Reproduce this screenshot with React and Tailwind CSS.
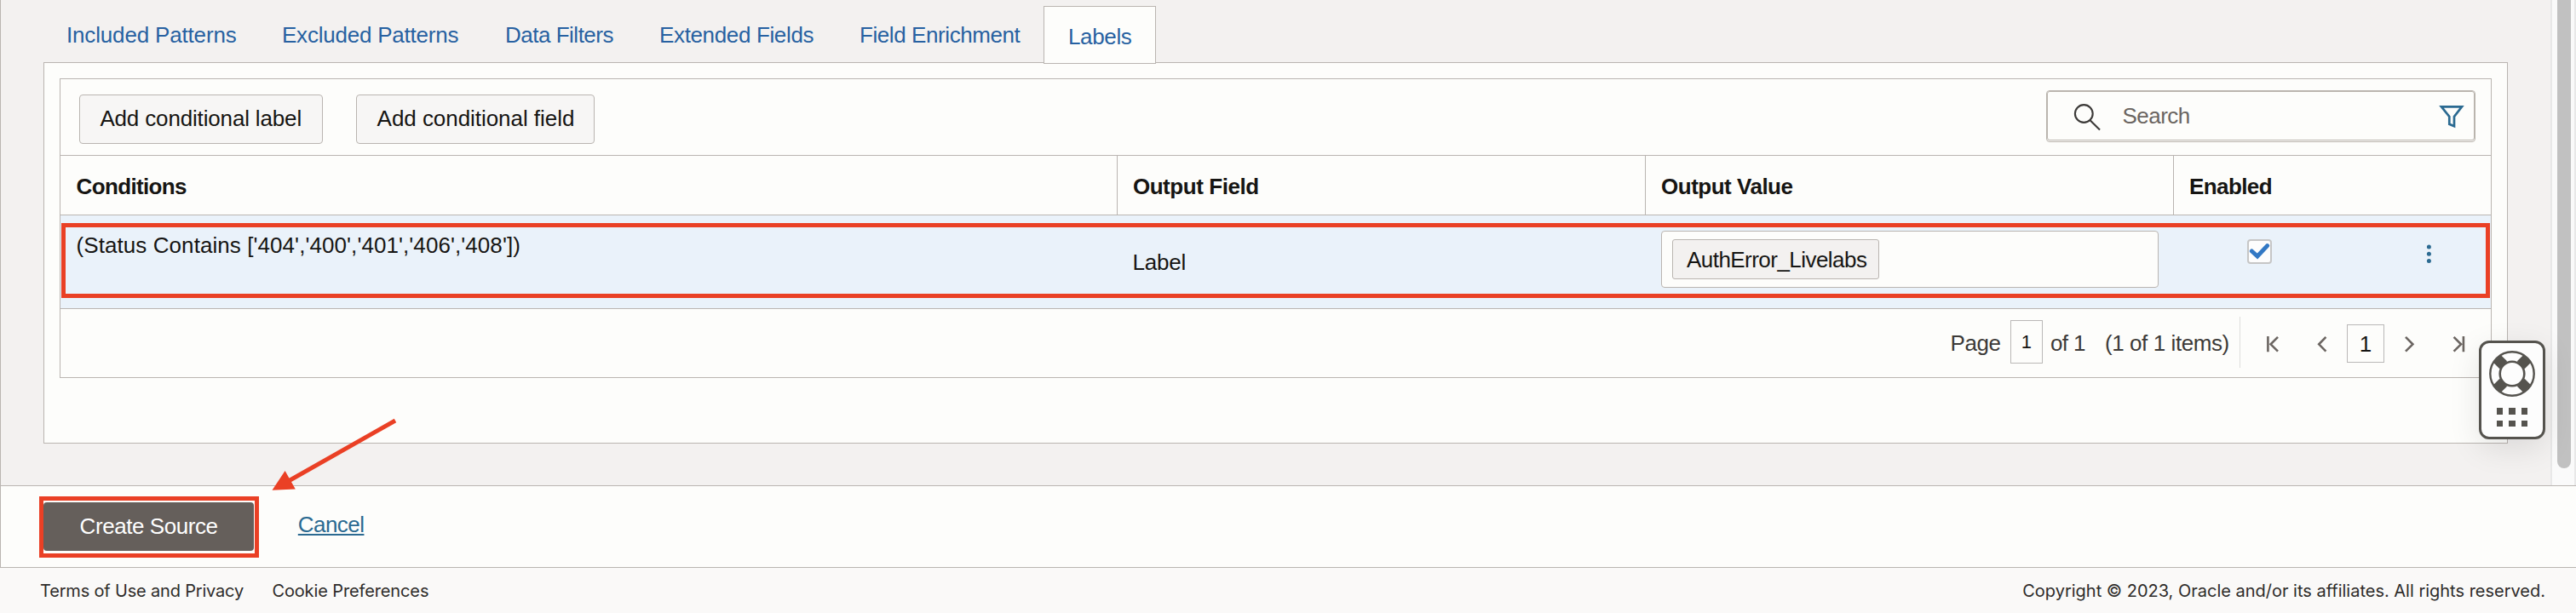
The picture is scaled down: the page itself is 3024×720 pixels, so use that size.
const tabs = [
  { label: 'Included Patterns', cls: 'w-[253px] tracking-[-0.166px]' },
  { label: 'Excluded Patterns', cls: 'w-[262px] tracking-[-0.219px]' },
  { label: 'Data Filters', cls: 'w-[181px] tracking-[-0.493px]' },
  { label: 'Extended Fields', cls: 'w-[235px] tracking-[-0.353px]' },
  { label: 'Field Enrichment', cls: 'w-[216px] tracking-[-0.417px]' },
];

function TabBar() {
  return (
    <div className="relative z-10 flex h-[73px] shrink-0 items-start pl-[77px] text-[#2761a1]">
      {tabs.map((t) => (
        <button key={t.label} className={`mt-[26px] shrink-0 text-left ${t.cls}`}>
          {t.label}
        </button>
      ))}
      <button className="mt-[7px] h-[68px] w-[132px] border border-[#bab5b1] bg-[#fdfdfb] pt-[4px] pl-[28px] text-left tracking-[-0.363px]">
        Labels
      </button>
    </div>
  );
}

function SearchBox() {
  return (
    <div className="mt-[13px] mr-[18px] h-[61px] w-[504px] rounded-[4px] border border-[#bab5ae]">
      <div className="flex h-[58px] items-start rounded-[3px] border border-[#bab5ae]">
        <svg className="mt-[12px] ml-[28px] shrink-0" width="36" height="36" viewBox="2432 120 36 36" fill="none" stroke="#3c3a38" strokeWidth="2.1">
          <circle cx="2446.3" cy="133.5" r="10.4" />
          <path d="M2453.6 141.2 2465 152.6" />
        </svg>
        <span className="mt-[13px] ml-[23.5px] w-[368px] tracking-[-0.544px] text-[#6b6561]">Search</span>
        <svg className="mt-[14px] shrink-0" width="36" height="32" viewBox="2860 122 36 32" fill="none" stroke="#2b6a91" strokeWidth="2.7">
          <path d="M2866 125.4H2890L2881 137V148.2L2875.3 145.8V137Z" />
        </svg>
      </div>
    </div>
  );
}

function Toolbar() {
  return (
    <div className="flex h-[90px] items-start justify-between border-b border-[#bab5b1] pl-[22px]">
      <div className="flex gap-[39px] pt-[18px]">
        <button className="h-[58px] w-[286px] rounded-[4px] border border-[#bab5b1] bg-[#f7f6f5] pb-[2px] pl-[23.4px] text-left tracking-[-0.159px]">
          Add conditional label
        </button>
        <button className="h-[58px] w-[280px] rounded-[4px] border border-[#bab5b1] bg-[#f7f6f5] pb-[2px] pl-[23.6px] text-left tracking-[-0.048px]">
          Add conditional field
        </button>
      </div>
      <SearchBox />
    </div>
  );
}

function TableHeader() {
  return (
    <div className="flex h-[70px] border-b border-[#bab5b1] font-bold">
      <div className="w-[1241px] border-r border-[#bab5b1] pt-[21px] pl-[18.6px] tracking-[-0.643px]">Conditions</div>
      <div className="w-[620px] border-r border-[#bab5b1] pt-[21px] pl-[17.9px] tracking-[-0.436px]">Output Field</div>
      <div className="w-[620px] border-r border-[#bab5b1] pt-[21px] pl-[18px] tracking-[-0.489px]">Output Value</div>
      <div className="flex-1 pt-[21px] pl-[18px] tracking-[-0.592px]">Enabled</div>
    </div>
  );
}

function TableRow() {
  return (
    <div className="flex h-[110px] items-start border-b border-[#bab5b1] bg-[#eaf2fa]">
      <div className="w-[1241px] pt-[20px] pl-[18.6px] tracking-[0.069px]">(Status Contains ['404','400','401','406','408'])</div>
      <div className="w-[620px] pt-[40px] pl-[17.4px] tracking-[-0.185px]">Label</div>
      <div className="w-[620px] pt-[18px] pl-[18px]">
        <div className="h-[67px] w-[584px] rounded-[4px] border border-[#bab5b1] bg-[#fdfdfb] pt-[9px] pl-[12px]">
          <div className="h-[47px] w-[243px] rounded-[3px] border border-[#bab5b1] bg-[#f3f1f0] pt-[8px] pl-[16px] tracking-[-0.542px]">
            AuthError_Livelabs
          </div>
        </div>
      </div>
      <div className="mt-[28px] ml-[86px] h-[29px] w-[29px] rounded-[4px] border-2 border-[#c6c6c6] bg-[#fdfdfd]">
        <svg width="25" height="25" viewBox="2640 283 25 25" fill="none" stroke="#3278c4" strokeWidth="5">
          <path d="M2643.4 295 2650 301 2661.6 288.6" strokeLinecap="round" />
        </svg>
      </div>
      <svg className="mt-[30px] ml-[174px]" width="20" height="32" viewBox="2841 283 20 32" fill="#2b6a91">
        <circle cx="2851.4" cy="290" r="2.5" />
        <circle cx="2851.4" cy="298.3" r="2.5" />
        <circle cx="2851.4" cy="306.6" r="2.5" />
      </svg>
    </div>
  );
}

function NavIcon({ d, x, className }) {
  return (
    <svg className={`mt-[29px] shrink-0 ${className}`} width="20" height="24" viewBox={`${x} 392 20 24`} fill="none" stroke="#6b6561" strokeWidth="2.6">
      <path d={d} />
    </svg>
  );
}

function Pagination() {
  return (
    <div className="flex h-[80px] items-start pl-[2218.4px] text-[#3c3a38]">
      <span className="mt-[25px] w-[70.6px] shrink-0 tracking-[-0.354px]">Page</span>
      <span className="mt-[13px] flex h-[51px] w-[38px] shrink-0 items-center justify-center border border-[#bab8b7] text-[22px] text-[#161513]">1</span>
      <span className="mt-[25px] ml-[9px] w-[64px] shrink-0 tracking-[-0.6px]">of 1</span>
      <span className="mt-[25px] w-[158px] shrink-0 tracking-[-0.419px] whitespace-nowrap">(1 of 1 items)</span>
      <span className="mt-[9px] h-[60px] w-px shrink-0 bg-[#dedddb]" />
      <NavIcon x={2658} className="ml-[28px]" d="M2662.4 395V413.3M2674 395.9 2665.6 404.3 2674 412.7" />
      <NavIcon x={2716} className="ml-[38px]" d="M2730.4 395.9 2722.2 404.3 2730.4 412.7" />
      <span className="mt-[18px] ml-[19px] flex h-[45px] w-[44px] shrink-0 items-center justify-center border border-[#bab8b7] text-[#161513]">1</span>
      <NavIcon x={2818} className="ml-[19px]" d="M2824 395.9 2832.4 404.3 2824 412.7" />
      <NavIcon x={2876} className="ml-[38px]" d="M2880.6 395.9 2889 404.3 2880.6 412.7M2891.9 395V413.3" />
    </div>
  );
}

function SupportWidget() {
  return (
    <div className="absolute top-[400px] left-[2910px] z-30 flex h-[116px] w-[78px] flex-col items-center rounded-[12px] border-3 border-[#55534e] bg-[#fdfdfd] pt-[9px] shadow-[0_10px_36px_rgba(0,0,0,0.10)]">
      <svg width="54" height="54" viewBox="-27 -27 54 54" fill="none" stroke="#55534e">
        <g strokeWidth="12.5" transform="rotate(45)">
          <path d="M0 -14.5V-25M0 14.5V25M-14.5 0H-25M14.5 0H25" />
        </g>
        <circle r="25.7" strokeWidth="2.4" />
        <circle r="14.3" strokeWidth="2.6" />
      </svg>
      <div className="mt-[13px] grid grid-cols-3 gap-x-[7px] gap-y-[7px]">
        {[0, 1, 2, 3, 4, 5].map((i) => (
          <span key={i} className="h-[7.5px] w-[7.5px] bg-[#55534e]" />
        ))}
      </div>
    </div>
  );
}

export default function App() {
  return (
    <div className="relative flex h-[720px] w-[3024px] flex-col overflow-hidden bg-[#f3f1f0] font-['Liberation_Sans',Arial,sans-serif] text-[26px] leading-[30px] text-[#161513]">
      <div className="flex h-[570px] shrink-0">
        <main className="w-[2994px] border-l border-[#bab5b1]">
          <TabBar />
          <section className="ml-[50px] h-[448px] w-[2893px] border border-[#bab5b1] bg-[#fdfdfb] p-[18px]">
            <div className="h-[352px] border border-[#bab5b1]">
              <Toolbar />
              <TableHeader />
              <TableRow />
              <Pagination />
            </div>
          </section>
        </main>
        <div className="relative z-20 w-[30px] border-x-2 border-[#e8e8e8] bg-[#fafafa] pl-[6px]">
          <div className="h-[550px] w-[16px] rounded-b-full bg-[#c1c1c1]" />
        </div>
      </div>

      <div className="flex h-[97px] shrink-0 items-start border-y border-l border-[#bab5b1] bg-[#fdfdfb]">
        <button className="mt-[19px] ml-[50px] h-[57px] w-[247px] rounded-[4px] bg-[#655f5b] pb-px pl-[42.6px] text-left tracking-[-0.44px] text-white">
          Create Source
        </button>
        <a className="mt-[30px] ml-[51.8px] tracking-[-0.551px] text-[#2b6a91] underline decoration-2 underline-offset-[2px]">Cancel</a>
      </div>

      <footer className="flex flex-1 items-start justify-between bg-[#faf9f8] pt-[15px] pr-[36px] pl-[47px] font-[Inter,sans-serif] text-[20px] leading-[24px] text-[#2e2c2a]">
        <div className="flex">
          <span className="w-[272.4px] tracking-[-0.18px]">Terms of Use and Privacy</span>
          <span className="tracking-[-0.122px]">Cookie Preferences</span>
        </div>
        <span className="tracking-[-0.008px]">Copyright © 2023, Oracle and/or its affiliates. All rights reserved.</span>
      </footer>

      <SupportWidget />

      {/* annotations */}
      <div className="absolute top-[262px] left-[72px] h-[88px] w-[2851px] border-5 border-[#ea4025]" />
      <div className="absolute top-[583px] left-[46px] h-[72px] w-[258px] border-5 border-[#ea4025]" />
      <svg className="absolute top-[485px] left-[310px]" width="165" height="100" viewBox="310 485 165 100" fill="#ea4025">
        <path d="M464 494 336 566.5" stroke="#ea4025" strokeWidth="5" />
        <path d="M319.5 575.7 334.6 553 346.8 574.5Z" />
      </svg>
    </div>
  );
}
